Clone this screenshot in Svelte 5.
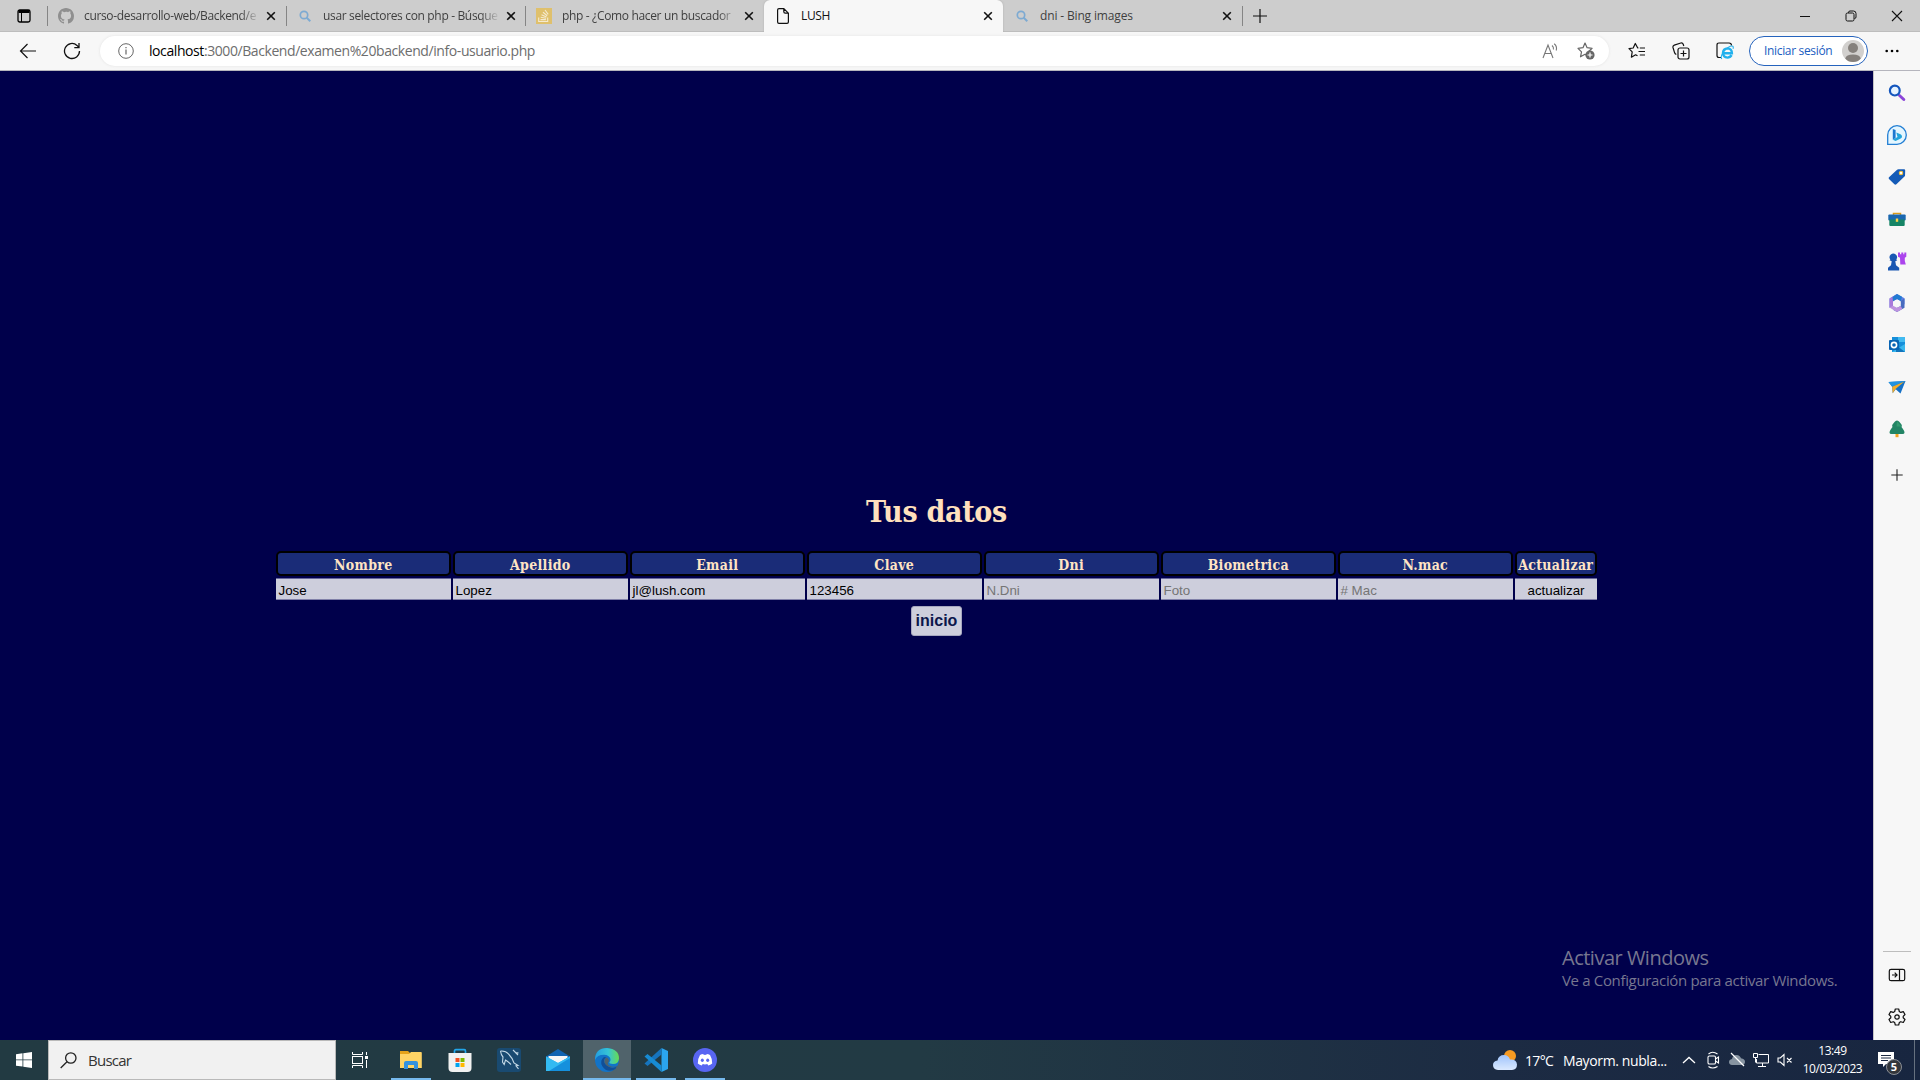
<script>
  const tabs = [
    { icon: 'github', title: 'curso-desarrollo-web/Backend/e', fade: true },
    { icon: 'search', title: 'usar selectores con php - Búsque', fade: true },
    { icon: 'stack', title: 'php - ¿Como hacer un buscador', fade: true },
    { icon: 'page', title: 'LUSH', active: true },
    { icon: 'search', title: 'dni - Bing images' }
  ];
  const fields = [
    { label: 'Nombre', value: 'Jose' },
    { label: 'Apellido', value: 'Lopez' },
    { label: 'Email', value: 'jl@lush.com' },
    { label: 'Clave', value: '123456' },
    { label: 'Dni', hint: 'N.Dni' },
    { label: 'Biometrica', hint: 'Foto' },
    { label: 'N.mac', hint: '# Mac' }
  ];
</script>

<div class="screen">
  <header class="tabstrip">
    <div class="tabmenu">
      <svg width="14" height="14" viewBox="0 0 14 14"><rect x="1" y="1" width="12" height="12" rx="1.8" fill="none" stroke="#000" stroke-width="1.3" /><path d="M1.500 1h11v3h-11z" /><path d="M4.500 4v9" stroke="#000" /></svg>
    </div>
    {#each tabs as tab}
      <div class="tab" class:active={tab.active}>
        <span class="favicon">
          {#if tab.icon === 'github'}
            <svg width="16" height="16" viewBox="0 0 16 16"><path fill="#8f8f8f" d="M8 0C3.58 0 0 3.58 0 8c0 3.54 2.29 6.53 5.47 7.59.4.07.55-.17.55-.38v-1.49c-2.01.37-2.53-.49-2.69-.94-.09-.23-.48-.94-.82-1.13-.28-.15-.68-.52-.01-.53.63-.01 1.08.58 1.23.82.72 1.21 1.87.87 2.33.66.07-.52.28-.87.51-1.07-1.78-.2-3.64-.89-3.64-3.95 0-.87.31-1.59.82-2.15-.08-.2-.36-1.02.08-2.12 0 0 .67-.21 2.2.82A7.6 7.6 0 0 1 8 3.86c.68 0 1.36.09 2 .27 1.53-1.04 2.2-.82 2.2-.82.44 1.1.16 1.92.08 2.12.51.56.82 1.27.82 2.15 0 3.07-1.87 3.75-3.65 3.95.29.25.54.73.54 1.48v2.2c0 .21.15.46.55.38A8.01 8.01 0 0 0 16 8c0-4.42-3.58-8-8-8z" /></svg>
          {:else if tab.icon === 'search'}
            <svg width="16" height="16" viewBox="0 0 16 16" fill="none" stroke="#7daad2" stroke-width="1.7"><circle cx="7" cy="7" r="3.7" /><path d="M9.7 9.7l3.6 3.6" stroke-width="2" /></svg>
          {:else if tab.icon === 'stack'}
            <svg width="16" height="16" viewBox="0 0 16 16"><rect width="16" height="16" fill="#dfc06c" /><path d="M2.7 9.5v4h9v-4M4.5 11.6h5.4M4.7 9.3l5.4 1M5.5 6.8l5 2.2M7 4.3l4.2 3.4M9 2l3.2 4.4" fill="none" stroke="#f5ead0" stroke-width="1.1" /></svg>
          {:else}
            <svg width="16" height="16" viewBox="0 0 16 16"><path d="M2.6 2q0-1.4 1.4-1.4h4.8l4.6 4.6V14q0 1.4-1.4 1.4H4Q2.6 15.4 2.6 14zM8.8.6v3.2q0 1.4 1.4 1.4h3.2" fill="none" stroke="#111" stroke-width="1.2" /></svg>
          {/if}
        </span>
        <span class="title" class:fade={tab.fade}>{tab.title}</span>
        <svg class="close" width="10" height="10" viewBox="0 0 10 10"><path d="M1.2 1.2l7.6 7.6M8.8 1.2L1.2 8.8" stroke="#111" stroke-width="1.6" /></svg>
      </div>
    {/each}
    <div class="newtab">
      <svg width="14" height="14" viewBox="0 0 14 14"><path d="M7 0v14M0 7h14" stroke="#111" stroke-width="1.2" /></svg>
    </div>
    <div class="wincontrols">
      <span><svg width="12" height="12"><path d="M1 6.500h10" stroke="#111" /></svg></span>
      <span><svg width="12" height="12" fill="none" stroke="#111"><rect x="1" y="3" width="8" height="8" rx="1.500" /><path d="M3.500 3V2.500Q3.500 1 5 1h3.500Q11 1 11 3.500V7q0 1.500-1.500 1.500" /></svg></span>
      <span><svg width="12" height="12"><path d="M1 1l10 10M11 1L1 11" stroke="#111" stroke-width="1.1" /></svg></span>
    </div>
  </header>

  <div class="toolbar">
    <span class="nav"><svg width="18" height="18" viewBox="0 0 18 18" fill="none" stroke="#111" stroke-width="1.2"><path d="M17 9H1.500M8.500 2l-7 7 7 7" /></svg></span>
    <span class="nav"><svg width="18" height="18" viewBox="0 0 18 18" fill="none" stroke="#111" stroke-width="1.3"><path d="M16.500 9A7.500 7.500 0 1 1 14 3.400L16 5.500M16 1v4.700h-4.700" /></svg></span>
    <div class="address">
      <svg width="16" height="16" viewBox="0 0 16 16" fill="none" stroke="#666"><circle cx="8" cy="8" r="7.300" /><path d="M8 6.500v5M8 4v1.300" stroke-width="1.2" /></svg>
      <span class="url"><b>localhost</b>:3000/Backend/examen%20backend/info-usuario.php</span>
      <svg class="read" width="17" height="16" viewBox="0 0 17 16" fill="none" stroke="#777" stroke-width="1.1"><path d="M1 15L6 2l5 13M2.800 10.500h6.500M10 2.500q2 1.700 1.400 4M12.200.8q3.200 2.600 2 6.700" /></svg>
      <svg class="fav" width="18" height="18" viewBox="0 0 18 18"><path d="M8 1l2.100 4.700 5 .6-3.700 3.500 1 5-4.400-2.500-4.500 2.500 1-5L1 6.300l5-.6z" fill="none" stroke="#666" stroke-width="1.2" stroke-linejoin="round" /><circle cx="13" cy="13" r="4.600" fill="#666" /><path d="M13 10.500v5M10.500 13h5" stroke="#fff" stroke-width="1.2" /></svg>
    </div>
    <div class="actions">
      <svg width="18" height="18" viewBox="0 0 18 18" fill="none" stroke="#111" stroke-width="1.2" stroke-linejoin="round"><path d="M10.500 6L9.600 5.800 7.300 1.500 5.200 6 1 6.600l3.200 3.300-.8 5.300 4.200-2.400 1.900 1M11.800 6H17M10.500 9.500H17M11.800 13H17" /></svg>
      <svg width="18" height="18" viewBox="0 0 18 18" fill="none" stroke="#111" stroke-width="1.2"><rect x="6" y="6" width="11" height="11" rx="2" /><path d="M11.500 8.500v6M8.500 11.500h6M4.300 12.500Q3 12 2.600 10.800L1 5.500Q.6 3.700 2.300 3.100L8.800 1q1.800-.4 2.400 1.300L11.800 4" /></svg>
      <svg width="18" height="18" viewBox="0 0 18 18" fill="none"><path d="M5 15.500H3Q1 15.500 1 13.500V3Q1 1 3 1h10q2.500 0 2.500 2.500" stroke="#111" stroke-width="1.2" /><path d="M15.600 13.200Q14.200 15.600 11.400 15.600 7 15.400 7 10.800 7.200 6.600 11.500 6.400q4.400.2 4.400 4.800H8" stroke="#22b1ed" stroke-width="2.4" /><path d="M5.800 17Q3.800 14.500 8 9q6-6 8.800-4.800.8.800.2 2.500" stroke="#22b1ed" stroke-width="1.1" /></svg>
    </div>
    <div class="signin"><span>Iniciar sesión</span>
      <svg width="22" height="22" viewBox="0 0 22 22"><circle cx="11" cy="11" r="11" fill="#d2d0ce" /><circle cx="11" cy="8" r="5" fill="#85807c" /><path d="M3.200 18.500q1-4 7.800-4t7.800 4Q16 22 11 22t-7.800-3.500z" fill="#85807c" /></svg>
    </div>
    <svg class="dots" width="14" height="4"><circle cx="1.700" cy="2" r="1.300" /><circle cx="7" cy="2" r="1.300" /><circle cx="12.300" cy="2" r="1.300" /></svg>
  </div>

  <div class="middle">
    <main>
      <h1>Tus datos</h1>
      <div class="grid">
        {#each fields as f}<div class="head">{f.label}</div>{/each}
        <div class="head">Actualizar</div>
        {#each fields as f}<div class="cell" class:hint={f.hint}>{f.value ?? f.hint}</div>{/each}
        <div class="cell update">actualizar</div>
      </div>
      <div class="home">inicio</div>
      <div class="watermark"><div class="w1">Activar Windows</div><div class="w2">Ve a Configuración para activar Windows.</div></div>
    </main>

    <aside>
      <svg viewBox="0 0 20 20"><path d="M12.500 12.500l4.300 4" stroke="#8b45d8" stroke-width="3" stroke-linecap="round" /><circle cx="7.800" cy="7.600" r="4.900" fill="#e6f3ff" stroke="#1456bd" stroke-width="2.200" /></svg>
      <svg viewBox="0 0 20 20"><path d="M.7 19.300V10A9.300 9.300 0 1 1 10 19.300z" fill="#e4f6ff" stroke="#237fd4" stroke-width="1.300" /><path d="M5.800 4l2.800 1v8l-2.800 1.800z" fill="#1a78d0" /><path d="M9.300 7.500l4.200 1.700q1.500.8 1.500 2.300 0 1.300-1.300 2L8.600 16l-2.800-1.200 4.700-2.800z" fill="#22a5dc" /></svg>
      <svg viewBox="0 0 20 20"><path d="M2 10.300L9.800 3q.7-.6 1.700-.7L17 2.300q1.300 0 1.200 1.300L18 9l-8.600 8.300q-1 .8-2 0L2 12q-.8-.9 0-1.700z" fill="#145bb7" /><circle cx="14" cy="6" r="1.700" fill="#fff" stroke="#f5c23d" stroke-width="1.100" /></svg>
      <svg viewBox="0 0 20 20"><path d="M6.500 7V4.500h7V7" fill="none" stroke="#d99b1b" stroke-width="1.500" /><rect x="1.300" y="5.500" width="17.400" height="6" rx="1" fill="#1a67b0" /><path d="M2.300 10.500h15.400V16q0 1-1 1H3.300q-1 0-1-1z" fill="#168566" /><path d="M8.800 9.500h2.400v3.300H8.800z" fill="#ffd34c" /></svg>
      <svg viewBox="0 0 20 20"><path d="M11 1.500h2v1.700h1.300V1.500h2v1.700h1V1.500h2v4.200l-1.500 1V10l1 3.500h-5.500L13 6.700l-2-1z" fill="#ac45ed" /><path d="M3.300 8.500a3.700 3.700 0 1 1 6 0l1 .8-2 1 .7 4 3.200 2.500v2.700H1v-2.700l3-2.500.7-4-2.200-1z" fill="#1957b2" /></svg>
      <svg viewBox="0 0 20 20"><path d="M10 1l7.500 4.300v6.200L14 8.500 10 6 6 8.200V13l-3.500 1.800V5.500z" fill="#5d7fe3" /><path d="M2.500 5.500L10 1v5L6 8.200V13l-3.500 1.800z" fill="#a97adb" /><path d="M13.800 8l3.700-2.500v9.200L10 19l-4-2.300 7.800-3.700z" fill="#486bbf" /><path d="M2.500 14.500L6 12.800l4 2 3.800-1.800 1.500 3L10 19z" fill="#bd92df" /><path d="M10 1l5 2.800-1.200 4.100L10 6 6 8.200 5.500 4z" fill="#227bd2" /><circle cx="10" cy="10.200" r="3.200" fill="#f7f7f7" /></svg>
      <svg viewBox="0 0 20 20"><path d="M5 2h13v15H5z" fill="#168fda" /><path d="M11 2h7v5h-7z" fill="#42baf0" /><path d="M5 17l13-8v8z" fill="#39b7ed" /><path d="M9 10l9 7H9z" fill="#1275bd" /><rect x="2" y="5" width="10" height="10" rx="1" fill="#0864b4" /><circle cx="7" cy="10" r="2.600" fill="none" stroke="#fff" stroke-width="1.600" /></svg>
      <svg viewBox="0 0 20 20"><path d="M1.500 5l17-1-5 12.500-4.800-4.200-3 4-.5-6.500z" fill="#1671c6" /><path d="M1.500 5l17-1L5.200 9.800z" fill="#2293e0" /><path d="M5.200 9.800L17.500 4.500 8.500 12l-2.800 4.300z" fill="#f6ac26" /></svg>
      <svg viewBox="0 0 20 20"><path d="M8.500 12h3v6.200h-3z" fill="#f5a51e" /><path d="M10 1.500q1.500 0 2.500 1.500l2 2.500q.8 1.300 0 2.500 3 3.500 3 5.500 0 1.500-2 1.500h-11q-2 0-2-1.500 0-2 3-5.500-.8-1.200 0-2.500l2-2.500q1-1.500 2.500-1.500z" fill="#238565" /><path d="M10 2l4.500 5.500h-5z" fill="#339b70" /></svg>
      <svg class="plus" viewBox="0 0 20 20"><path d="M10 4.300v11.400M4.300 10h11.400" stroke="#222" stroke-width="1.100" /></svg>
      <div class="spacer"></div>
      <div class="rule"></div>
      <svg class="low" viewBox="0 0 20 20" fill="none" stroke="#111" stroke-width="1.2"><rect x="2.300" y="4.300" width="15.400" height="11.400" rx="1.800" /><path d="M12.500 4.500v11M5 10h5M7.700 7.700L10 10l-2.300 2.300" /></svg>
      <svg class="low" viewBox="0 0 20 20" fill="none" stroke="#111" stroke-width="1.2" stroke-linejoin="round"><path d="M8.300 2h3.400l.6 2.500 1.500.9 2.500-.8L18 7.500 16.200 9.300v1.500L18 12.500l-1.700 3-2.500-.8-1.500.9-.6 2.400H8.300l-.6-2.400-1.500-.9-2.500.8L2 12.500l1.800-1.700V9.300L2 7.500l1.700-2.900 2.500.8 1.500-.9z" /><circle cx="10" cy="10" r="2.200" /></svg>
    </aside>
  </div>

  <footer>
    <div class="start"><svg width="16" height="16" viewBox="0 0 16 16" fill="#fff"><path d="M0 2.200l6.500-.9v6.200H0zM7.300 1.200L16 0v7.500H7.300zM0 8.300h6.500v6.300L0 13.700zM7.300 8.300H16V16l-8.700-1.200z" /></svg></div>
    <div class="search"><svg width="17" height="17" viewBox="0 0 17 17" fill="none" stroke="#222" stroke-width="1.3"><circle cx="10.800" cy="6" r="5.200" /><path d="M7 9.800L.7 16" /></svg><span>Buscar</span></div>
    <div class="app view"><svg width="17" height="16" viewBox="0 0 17 16" fill="none" stroke="#fff"><path d="M.5 0v2.500h10V0M.5 16v-2.500h10V16M14.500 0v3M14.500 8v8" /><rect x=".5" y="4.500" width="10" height="7" /><path d="M13 4h3v3h-3z" fill="#fff" stroke="none" /></svg></div>
    <div class="app open"><svg viewBox="0 0 24 24"><path d="M1 3h8l2 2h11v15H1z" fill="#e5a31a" /><path d="M1 6h9l2-2h10q.8 0 .8 1v15H1z" fill="#ffd465" /><path d="M5 21v-6q0-2 2-2h10q2 0 2 2v6h-4v-4H9v4z" fill="#3492df" /></svg></div>
    <div class="app"><svg viewBox="0 0 24 24"><path d="M6.500 6V3q0-1.300 1.300-1.300h8.400q1.300 0 1.300 1.300v3" fill="none" stroke="#22a6ea" stroke-width="1.700" /><path d="M.5 5h23v15q0 4-4 4h-15q-4 0-4-4z" fill="#f1f1f1" /><path fill="#f25022" d="M7.500 10h4v4h-4z" /><path fill="#7fba00" d="M12.500 10h4v4h-4z" /><path fill="#00a4ef" d="M7.500 15h4v4h-4z" /><path fill="#ffb900" d="M12.500 15h4v4h-4z" /></svg></div>
    <div class="app"><svg viewBox="0 0 24 24"><rect width="24" height="24" rx="3" fill="#194a71" /><path d="M3.500 3q5-.5 8 3 4 4 5.500 9l4 2.500-2 .3 2.500 3M3.500 3q.5 4 2.500 6l-.5 5 1.700 2.500L8.500 12q3 2 5.500 4.500M16 2l2.500 2.500 3 .5M18.500 4.500L21 7" fill="none" stroke="#c4d9e6" stroke-width="1.100" /></svg></div>
    <div class="app"><svg viewBox="0 0 24 24"><path d="M0 8.500L12 1l12 7.500V12H0z" fill="#1063b1" /><path d="M2.500 8h19v8h-19z" fill="#f5f5f5" /><path d="M0 8.500l12 6.500 12-6.500V23H0z" fill="#2bb4f1" /><path d="M0 23L24 8.500V23z" fill="#1590dd" /><path d="M0 8.500L12 15 24 8.500V10L3 23H0z" fill="#33baf2" /></svg></div>
    <div class="app open current"><svg viewBox="0 0 24 24"><defs><linearGradient id="edgeTop" x1="0" x2="1"><stop stop-color="#249ee0" /><stop offset=".55" stop-color="#35c4d6" /><stop offset="1" stop-color="#68dc51" /></linearGradient></defs><circle cx="12" cy="12" r="12" fill="#1273c8" /><path d="M0 12Q0 0 12 0q12 1 12 10.500Q23.500 16 18 16q-4 0-3.600-1.700 1.400-1.200 1.100-3.300Q14.300 7 9 6.800 2 6.800 0 12z" fill="url(#edgeTop)" /><path d="M9 9q-5 4-1.500 9.500Q11 24 18 22.300q3-1.500 4.500-4Q18 21 13.500 18.500 8.500 15.500 9 12q.4-2 2.500-2.500z" fill="#114f97" /><path d="M11.500 9.500q-2.700 2-2 5 1.500 4 7 4.700 3.500.3 6-1.200l1.500-3V24h-2l-1-4 1-2q-2 1-5.500.4-4-.9-3.600-3.400 2.100-2.300-.4-5z" fill="#50636b" /></svg></div>
    <div class="app open"><svg viewBox="0 0 24 24"><path d="M17.500 0L24 3v18l-6.500 3V0z" fill="#2ba5ef" /><path d="M17.500 0v6.500L3.500 18 .5 15.500z" fill="#1674bd" /><path d="M.5 8.500L3.500 6l14 11.500V24z" fill="#178bd3" /></svg></div>
    <div class="app open"><svg viewBox="0 0 24 24"><circle cx="12" cy="12" r="12" fill="#5865f2" /><path d="M7 6.900q1.600-.8 3.300-1l.5 1q1.200-.2 2.400 0l.5-1q1.700.2 3.300 1 2.500 4 2.200 8.700-1.800 1.400-4 2l-.9-1.500q-2.300.6-4.600 0l-.9 1.500q-2.200-.6-4-2Q4.500 10.900 7 6.900z" fill="#fff" /><ellipse cx="9.300" cy="12.200" rx="1.500" ry="1.700" fill="#5865f2" /><ellipse cx="14.700" cy="12.200" rx="1.500" ry="1.700" fill="#5865f2" /></svg></div>
    <div class="tray">
      <svg class="weather" width="24" height="20" viewBox="0 0 24 20"><defs><linearGradient id="cloud" y2="1" x2="0"><stop stop-color="#9fc3fb" /><stop offset="1" stop-color="#dbe9ff" /></linearGradient></defs><circle cx="17" cy="6" r="6" fill="#f69a22" /><path d="M5 20q-5-.5-5-5 0-4 4.500-4.500Q5.500 5 11 5q4.500.2 6 4.500 6.500-.5 7 5 0 5-5 5.500z" fill="url(#cloud)" /></svg>
      <span class="temp">17°C</span><span class="sky">Mayorm. nubla...</span>
      <svg class="chev" width="14" height="8"><path d="M1 7l6-5.500L13 7" fill="none" stroke="#fff" stroke-width="1.3" /></svg>
      <svg width="16" height="18" viewBox="0 0 16 18" fill="none" stroke="#fff" stroke-width="1.1"><rect x="3" y="5" width="7.500" height="8" rx="1.300" /><path d="M10.500 8l3-2v6l-3-2M3.500 3q4-3.500 9 0M3.500 15.500q4 3 9 0" /></svg>
      <svg width="16" height="16" viewBox="0 0 16 16"><path d="M3 13q-3-.5-3-3t3-3q.8-3.700 4.500-4 3.500.2 4.500 3.300 4 .5 4 3.500t-3 3.200z" fill="#8794a1" /><path d="M2 1l13 13" stroke="#fff" stroke-width="1.3" /></svg>
      <svg width="16" height="16" viewBox="0 0 16 16" fill="none" stroke="#fff"><path d="M5.500 2.500h10v8.500h-12V7M9.500 11v3M5 14.500h8M.5 1.500h4v4h-4zM2.500 5.500v5" /></svg>
      <svg width="16" height="16" viewBox="0 0 16 16" fill="none" stroke="#fff" stroke-width="1.1"><path d="M1 6v4h2.300L7 13.500v-11L3.300 6zM10 6l4.500 4.500M14.500 6L10 10.500" /></svg>
      <div class="clock"><span>13:49</span><span>10/03/2023</span></div>
      <div class="note"><svg width="16" height="15" viewBox="0 0 16 15"><path d="M0 0h16v12H8l-3 3v-3H0z" fill="#fff" /><path d="M3 3.500h10M3 6h10M3 8.500h7" stroke="#1b2942" /></svg><i>5</i></div>
      <div class="peek"></div>
    </div>
  </footer>
</div>

<style>
  :global(body) { margin: 0; overflow: hidden; }
  * { box-sizing: border-box; }
  svg { display: block; flex: none; }
  .screen { width: 1920px; height: 1080px; display: flex; flex-direction: column; font-family: "Open Sans", "Noto Sans", sans-serif; overflow: hidden; white-space: nowrap; }

  .tabstrip { height: 32px; display: flex; background: #cdcdcd; box-shadow: inset 0 -1px #bdbdbd; }
  .tabmenu { width: 47px; display: flex; align-items: center; justify-content: center; }
  .tab { width: 239px; display: flex; align-items: center; padding: 0 10px 0 11px; position: relative; color: #3f3f3f; font-size: 12px; }
  .tab::before { content: ""; position: absolute; left: 0; top: 6px; width: 1px; height: 20px; background: #858585; }
  .tab.active { background: #f7f7f7; border-radius: 6px 6px 0 0; color: #111; box-shadow: 0 0 2px #aaa; clip-path: inset(0 -2px 0 -2px); }
  .tab.active::before, .tab.active + .tab::before { display: none; }
  .favicon { width: 16px; margin-right: 10px; }
  .title { flex: 1; letter-spacing: -.15px; line-height: 18px; margin-right: 8px; }
  .active .title { letter-spacing: -.35px; }
  .fade { letter-spacing: -.34px; -webkit-mask-image: linear-gradient(90deg, #000 90%, transparent 101%); mask-image: linear-gradient(90deg, #000 90%, transparent 101%); }
  .newtab { width: 36px; border-left: 1px solid #858585; margin: 6px 0; height: 20px; padding: 3px 0 0 10px; }
  .wincontrols { margin-left: auto; display: flex; }
  .wincontrols span { width: 46px; display: flex; align-items: center; justify-content: center; }

  .toolbar { height: 39px; background: #f7f7f7; display: flex; align-items: center; padding: 0 0 1px 6px; border-bottom: 1px solid #b5b5bd; }
  .nav { width: 44px; display: flex; justify-content: center; }
  .address { margin-left: 6px; width: 1509px; height: 30px; border-radius: 15px; background: #fff; display: flex; align-items: center; padding: 0 14px 0 18px; box-shadow: 0 0 3px #e2e2e2; }
  .url { margin-left: 15px; font-size: 14px; letter-spacing: -.42px; color: #6d6d6d; }
  .url b { font-weight: 400; color: #000; }
  .read { margin-left: auto; margin-right: 18px; }
  .actions { width: 140px; padding-left: 19px; display: flex; gap: 26px; }
  .signin { width: 119px; height: 30px; border: 1px solid #2563bd; border-radius: 15px; display: flex; align-items: center; justify-content: space-between; padding: 0 3px 0 14px; color: #1a5dbf; font-size: 12px; letter-spacing: -.33px; background: #fff; }
  .dots { margin-left: 17px; }

  .middle { height: 969px; display: flex; }
  main { width: 1873px; background: #00004b; display: flex; flex-direction: column; align-items: center; position: relative; }
  h1 { margin: 418px 0 0; height: 46px; font: 700 30px/46px "DejaVu Serif Condensed", "DejaVu Serif", serif; font-stretch: condensed; color: #ffe0bd; letter-spacing: -.3px; }
  .grid { display: grid; grid-template-columns: repeat(7, 175px) 82px; grid-template-rows: 25px 22px; gap: 2px; margin-top: 16px; }
  .head { margin: 0 .5px 0 0; padding-top: 1px; border: 2px solid #000; border-radius: 5px; background: #1a2c78; color: #ffe4c4; font: 700 14px/22px "DejaVu Serif Condensed", "DejaVu Serif", serif; font-stretch: condensed; letter-spacing: .3px; display: flex; justify-content: center; }
  .cell { background: #cdcedc; border-top: 1px solid #65659a; border-bottom: 1px solid #8080a8; font: 13.330px/23px "Liberation Sans", Arial, sans-serif; padding-left: 2.500px; color: #000; }
  .hint { color: #757575; }
  .update { text-align: center; padding: 0; }
  .home { margin-top: 6px; width: 51px; height: 30px; border-radius: 3px; border: 1px solid #a6a7bf; background: #cdcedc; color: #0b164b; font: 700 16px/27px "Liberation Sans", Arial, sans-serif; text-align: center; }
  .watermark { position: absolute; left: 1562px; top: 871px; color: #777790; }
  .w1 { font-size: 20px; line-height: 32px; letter-spacing: -.5px; }
  .w2 { font-size: 15px; line-height: 13px; letter-spacing: -.34px; }

  aside { width: 47px; background: #f7f7f7; border-left: 1px solid #c4c4c4; display: flex; flex-direction: column; align-items: center; padding: 12px 0 13px; }
  aside svg { width: 20px; height: 20px; margin-bottom: 22px; }
  aside .plus { margin: 4px 0 0; }
  .spacer { flex: 1; }
  .rule { width: 28px; height: 1px; background: #bdbdbd; margin-bottom: 13px; }
  aside .low:last-child { margin-bottom: 0; }

  footer { height: 40px; display: flex; background: linear-gradient(90deg, #223a42 0%, #223a44 48%, #1c2b43 78%, #182640 100%); color: #fff; }
  .start { width: 48px; display: flex; align-items: center; justify-content: center; }
  .search { width: 288px; background: #f1f1f1; border: 1px solid #b9b9b9; display: flex; align-items: center; padding-left: 11px; color: #333; font-size: 15px; letter-spacing: -.75px; }
  .search span { margin-left: 11px; }
  .app { width: 49px; display: flex; align-items: center; justify-content: center; position: relative; }
  .app svg { width: 24px; height: 24px; }
  .app.view { width: 50px; padding-right: 2px; }
  .app.view svg { width: 17px; height: 16px; }
  .open::after { content: ""; position: absolute; left: 5px; right: 4px; bottom: 0; height: 2px; background: #76b9ed; }
  .app.current { padding-left: 1px; background-color: #50636b; background-clip: content-box; }
  .current::after { left: 1px; right: 0; }
  .tray { margin-left: auto; display: flex; align-items: center; width: 427px; }
  .temp { margin-left: 8px; width: 38px; font-size: 14px; letter-spacing: -.65px; }
  .sky { width: 119px; font-size: 14px; letter-spacing: -.38px; }
  .tray .chev { margin-right: 9px; }
  .tray svg + svg { margin-right: 8px; }
  .clock { width: 73px; margin-left: -5px; display: flex; flex-direction: column; align-items: center; font-size: 12px; line-height: 18px; letter-spacing: -.4px; }
  .note { position: relative; margin-left: 9px; width: 36px; height: 17px; }
  .note i { position: absolute; left: 8px; top: 7px; width: 16px; height: 16px; border: 1px solid #8b8f96; border-radius: 50%; background: #33363b; font: 700 11px/14px "Open Sans", sans-serif; text-align: center; }
  .peek { width: 1px; height: 40px; background: #66717f; }
</style>
